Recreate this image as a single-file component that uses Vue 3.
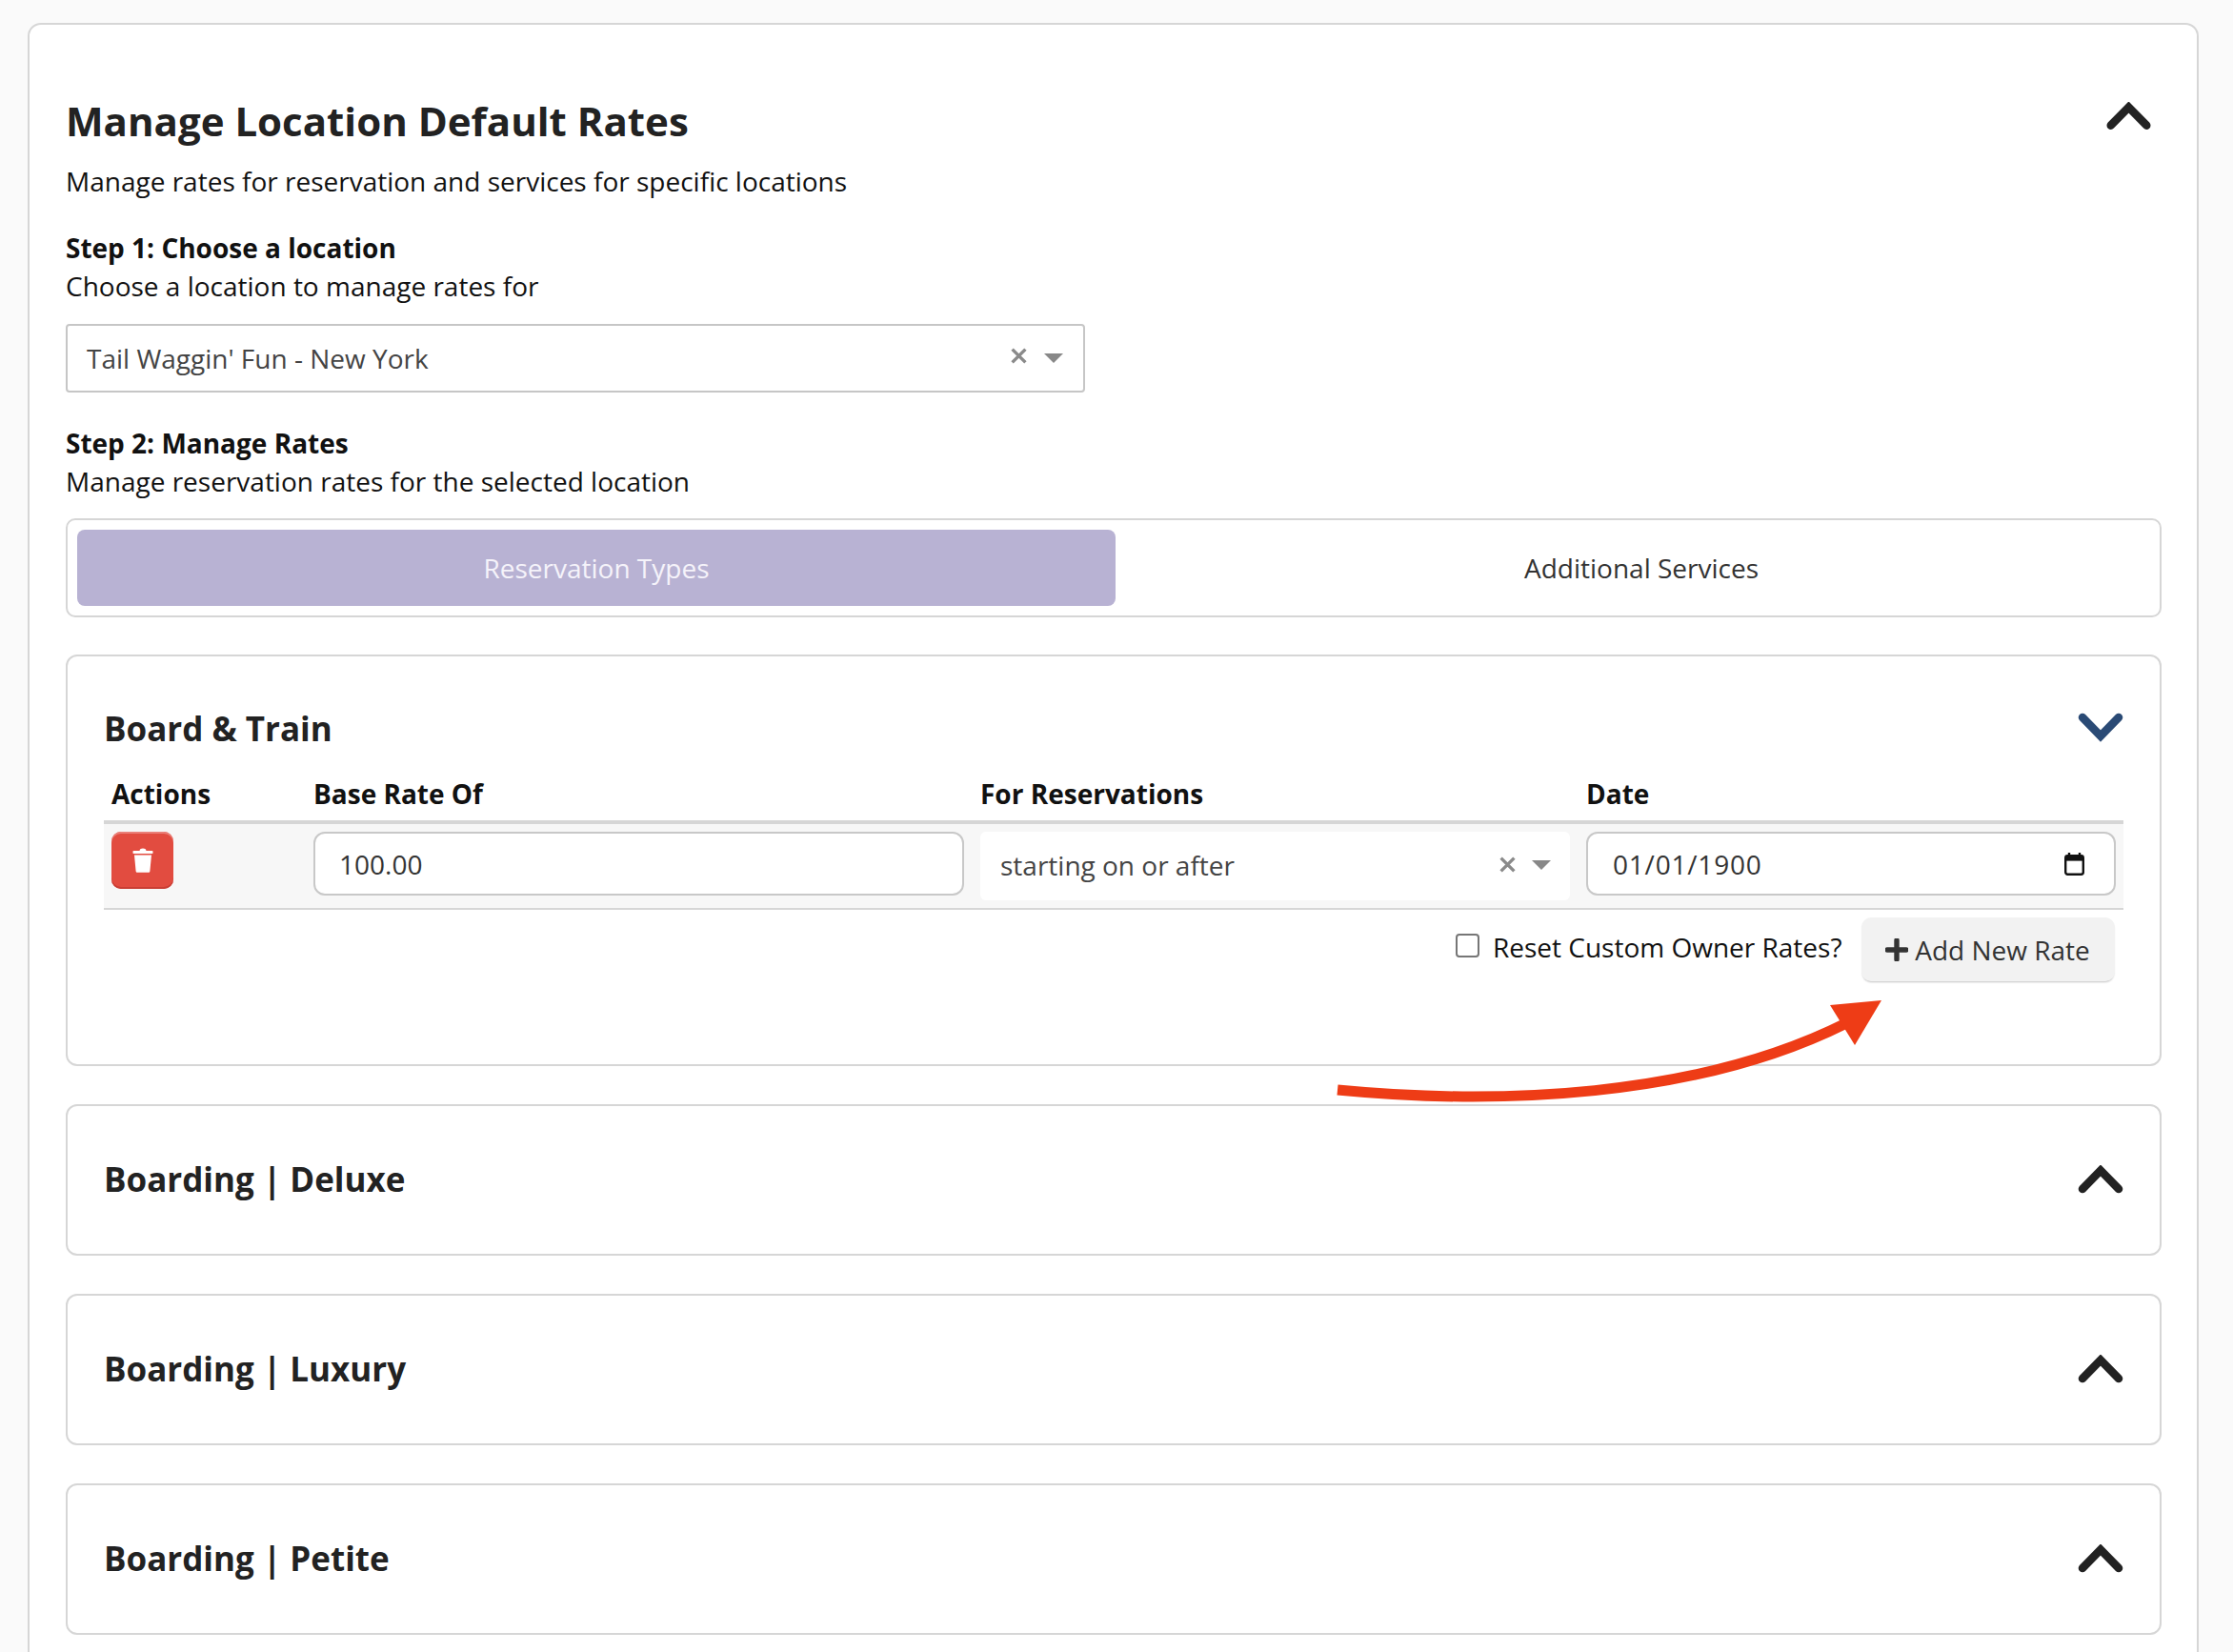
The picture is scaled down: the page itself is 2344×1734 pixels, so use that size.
<script setup>
const collapsed = ['Boarding | Deluxe', 'Boarding | Luxury', 'Boarding | Petite']
</script>

<template>
  <div class="page">
    <section class="outer">
      <div class="title-row">
        <h1 class="main-title">Manage Location Default Rates</h1>
        <svg class="chev-main" width="47" height="30" viewBox="0 0 47 30"><path d="M4.8 24.6 23.5 5.6 42.2 24.6" /></svg>
      </div>
      <p class="sub">Manage rates for reservation and services for specific locations</p>

      <p class="step">Step 1: Choose a location</p>
      <p class="line">Choose a location to manage rates for</p>
      <div class="location-select">
        <span>Tail Waggin' Fun - New York</span>
        <svg class="clear" width="17" height="17" viewBox="0 0 16 16"><path d="M1.5 1.5 14.5 14.5M14.5 1.5 1.5 14.5" /></svg>
        <span class="caret"></span>
      </div>

      <p class="step step-two">Step 2: Manage Rates</p>
      <p class="line">Manage reservation rates for the selected location</p>

      <div class="tabs">
        <div class="tab active">Reservation Types</div>
        <div class="tab">Additional Services</div>
      </div>

      <div class="card open">
        <div class="card-head">
          <h2 class="card-title">Board &amp; Train</h2>
          <svg class="chev-down" width="48" height="32" viewBox="0 0 48 32"><path d="M5 6 24 25.5 43 6" /></svg>
        </div>
        <div class="grid table-head">
          <span>Actions</span>
          <span>Base Rate Of</span>
          <span>For Reservations</span>
          <span>Date</span>
        </div>
        <div class="grid table-row">
          <button class="delete" type="button" aria-label="Delete">
            <svg width="22" height="26" viewBox="0 0 22 26">
              <path d="M7.5 3.2C7.8 1.2 9 .6 11 .6s3.2.6 3.5 2.6z" fill="#fff" />
              <rect x="0.5" y="3" width="21" height="3" rx="0.8" fill="#fff" />
              <path d="M2 7.4H20L18.4 24.2C18.3 25.3 17.7 25.8 16.7 25.8H5.3C4.3 25.8 3.7 25.3 3.6 24.2Z" fill="#fff" />
            </svg>
          </button>
          <div class="field">100.00</div>
          <div class="reserve-select">
            <span>starting on or after</span>
            <svg class="clear" width="17" height="17" viewBox="0 0 16 16"><path d="M1.5 1.5 14.5 14.5M14.5 1.5 1.5 14.5" /></svg>
            <span class="caret"></span>
          </div>
          <div class="field date">
            <span>01/01/1900</span>
            <svg width="21" height="24" viewBox="0 0 21 24">
              <path d="M5 0v4M16 0v4" stroke="#111" stroke-width="2.4" fill="none" />
              <rect x="1.2" y="3.2" width="18.6" height="19.6" rx="2.2" fill="#fff" stroke="#111" stroke-width="2.4" />
              <rect x="1.2" y="3.2" width="18.6" height="5.4" fill="#111" />
            </svg>
          </div>
        </div>
        <div class="actions">
          <label class="reset">
            <input type="checkbox" />
            <span>Reset Custom Owner Rates?</span>
          </label>
          <button class="add" type="button">
            <svg width="24" height="24" viewBox="0 0 24 24"><path d="M12 2V22M2 12H22" /></svg>
            <span>Add New Rate</span>
          </button>
        </div>
      </div>

      <div v-for="name in collapsed" :key="name" class="card closed">
        <h2 class="card-title">{{ name }}</h2>
        <svg class="chev-up" width="48" height="30" viewBox="0 0 48 30"><path d="M5 25 24 5.6 43 25" /></svg>
      </div>
    </section>

    <svg class="annotation" width="2344" height="1734" viewBox="0 0 2344 1734">
      <path d="M1404 1144C1570 1160 1780 1153 1938 1074" fill="none" stroke="#ee3c16" stroke-width="11" />
      <path d="M1975 1050 1921 1055 1947 1097Z" fill="#ee3c16" />
    </svg>
  </div>
</template>

<style>
html, body { margin: 0; background: #fafafa; }
</style>

<style scoped>
.page {
  position: relative;
  height: 1734px;
  overflow: hidden;
  box-sizing: border-box;
  padding: 24px 36px 0 29px;
  background: #fafafa;
  font-family: "Open Sans", "Liberation Sans", sans-serif;
  color: #1c1c1c;
}
p, h1, h2 { margin: 0; }
.outer {
  box-sizing: border-box;
  height: 1760px;
  padding: 71px 37px 0 38px;
  background: #fff;
  border: 2px solid #d6d6d6;
  border-radius: 14px;
}
.title-row {
  display: flex;
  justify-content: space-between;
  align-items: center;
  height: 60px;
}
.main-title {
  font-size: 42px;
  line-height: 60px;
  font-weight: 700;
  color: #222;
}
.chev-main { margin: 0 11px 10px 0; }
.chev-main path, .chev-up path {
  fill: none;
  stroke: #222;
  stroke-width: 8.6;
  stroke-linecap: round;
  stroke-linejoin: miter;
}
.sub { margin-top: 13px; font-size: 28px; line-height: 40px; color: #111; }
.step { margin-top: 30px; font-size: 28px; line-height: 40px; font-weight: 700; color: #111; }
.step-two { margin-top: 33px; }
.line { font-size: 28px; line-height: 40px; color: #111; }
.location-select {
  box-sizing: border-box;
  display: flex;
  align-items: center;
  width: 1070px;
  height: 72px;
  margin-top: 20px;
  padding: 0 21px 0 20px;
  border: 2px solid #c6c6c6;
  border-radius: 4px;
  font-size: 28px;
  color: #444;
}
.location-select > span:first-child, .reserve-select > span:first-child { flex: 1; }
.clear { margin: -5px 18px 0 0; flex: none; }
.clear path { fill: none; stroke: #8a8a8a; stroke-width: 3.2; }
.caret {
  flex: none;
  width: 0;
  height: 0;
  border-left: 10px solid transparent;
  border-right: 10px solid transparent;
  border-top: 10px solid #888;
}
.tabs {
  box-sizing: border-box;
  display: flex;
  gap: 18px;
  height: 104px;
  margin-top: 19px;
  padding: 10px;
  border: 2px solid #d6d6d6;
  border-radius: 10px;
}
.tab {
  flex: 1;
  display: flex;
  align-items: center;
  justify-content: center;
  font-size: 28px;
  color: #333;
  border-radius: 8px;
}
.tab.active { flex: 0 0 1090px; background: #b8b2d3; color: #f5f3fa; }
.card {
  box-sizing: border-box;
  border: 2px solid #d6d6d6;
  border-radius: 12px;
  background: #fff;
  padding: 0 38px;
}
.open { height: 432px; margin-top: 39px; padding-top: 46px; }
.closed {
  display: flex;
  align-items: center;
  justify-content: space-between;
  height: 158.5px;
  margin-top: 40.5px;
}
.open + .closed { margin-top: 40px; }
.card-head {
  display: flex;
  justify-content: space-between;
  align-items: center;
  height: 60px;
}
.card-title { font-size: 35px; line-height: 60px; font-weight: 700; color: #222; }
.chev-down { margin-bottom: 4px; }
.chev-down path {
  fill: none;
  stroke: #2a4a75;
  stroke-width: 8.6;
  stroke-linecap: round;
  stroke-linejoin: miter;
}
.grid {
  display: grid;
  grid-template-columns: 195px 683px 619px 556px;
  column-gap: 17px;
  padding-left: 8px;
}
.table-head {
  height: 48px;
  padding-top: 18px;
  box-sizing: content-box;
  line-height: 40px;
  font-size: 28px;
  font-weight: 700;
  color: #111;
  border-bottom: 4px solid #d6d6d6;
}
.table-row {
  box-sizing: border-box;
  height: 90px;
  padding-top: 8px;
  background: #f7f7f7;
  border-bottom: 2px solid #d6d6d6;
  align-items: start;
}
.delete {
  width: 65px;
  height: 60px;
  display: flex;
  align-items: center;
  justify-content: center;
  padding: 0;
  border: 0;
  border-radius: 10px;
  background: #e24c40;
  box-shadow: inset 0 2px 0 #ea8079, inset 0 -2px 0 #c93e34;
}
.field {
  box-sizing: border-box;
  height: 67px;
  display: flex;
  align-items: center;
  justify-content: space-between;
  padding: 0 31px 0 25px;
  background: #fff;
  border: 2px solid #c8c8c8;
  border-radius: 12px;
  font-size: 28px;
  color: #333;
}
.date { letter-spacing: 0.8px; padding-left: 26px; }
.reserve-select {
  box-sizing: border-box;
  height: 72px;
  display: flex;
  align-items: center;
  padding: 0 20px 2px 21px;
  background: #fff;
  border-radius: 6px;
  font-size: 28px;
  color: #444;
}
.reserve-select .clear { margin: -1px 17px 0 0; }
.actions {
  display: flex;
  justify-content: flex-end;
  align-items: center;
  gap: 20px;
  margin: 8px 9.5px 0 0;
}
.reset {
  display: flex;
  align-items: center;
  gap: 14px;
  font-size: 28px;
  color: #111;
  margin-bottom: 6px;
}
.reset input {
  appearance: none;
  box-sizing: border-box;
  width: 25px;
  height: 25px;
  margin: -2px 0 0;
  background: #fff;
  border: 2px solid #767676;
  border-radius: 4px;
}
.add {
  box-sizing: border-box;
  height: 67px;
  width: 266px;
  display: flex;
  align-items: center;
  justify-content: center;
  gap: 7px;
  padding: 0;
  border: 0;
  border-radius: 10px;
  background: #f2f2f2;
  box-shadow: 0 2px 2px -1px #c4c4c4;
  font: inherit;
  font-size: 28px;
  color: #333;
}
.add path { fill: none; stroke: #333; stroke-width: 5.4; stroke-linecap: round; }
.annotation { position: absolute; left: 0; top: 0; pointer-events: none; }
</style>
